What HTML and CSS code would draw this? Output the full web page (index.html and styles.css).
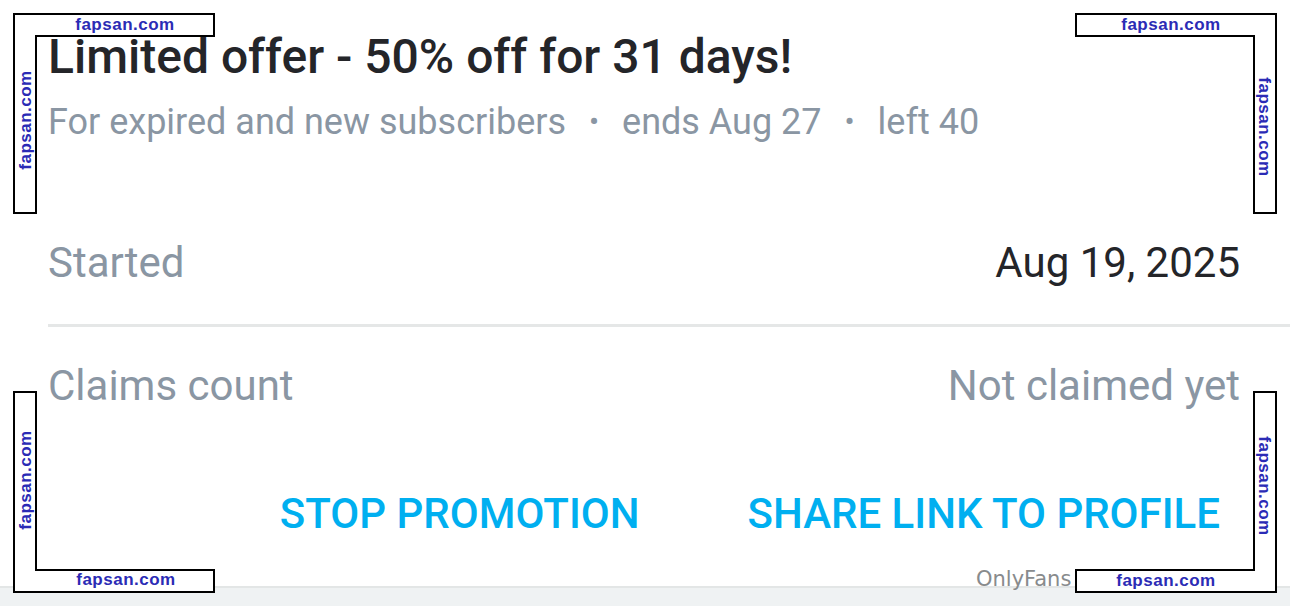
FILE: index.html
```html
<!DOCTYPE html>
<html lang="en">
<head>
    <meta charset="UTF-8">
    <meta name="viewport" content="width=device-width, initial-scale=1.0">
    <title>Limited offer</title>
    <link rel="stylesheet" href="styles.css">
</head>
<body>
    <div class="page">
        <div class="offer">
            <h1 class="offer-title">Limited offer - 50% off for 31 days!</h1>
            <div class="offer-meta">
                <span>For expired and new subscribers</span>
                <span class="dot">•</span>
                <span>ends Aug 27</span>
                <span class="dot">•</span>
                <span>left 40</span>
            </div>
        </div>

        <div class="row row-started">
            <span class="label">Started</span>
            <span class="value">Aug 19, 2025</span>
        </div>
        <div class="row row-claims">
            <span class="label">Claims count</span>
            <span class="value muted">Not claimed yet</span>
        </div>

        <div class="actions">
            <button class="action">STOP PROMOTION</button>
            <button class="action">SHARE LINK TO PROFILE</button>
        </div>

        <div class="brand">OnlyFans</div>
        <div class="bottom-bar"></div>

        <!-- watermark corners -->
        <svg class="watermark" width="1290" height="606" viewBox="0 0 1290 606">
            <g class="wm-frame">
                <polygon points="14,14 214,14 214,36 36,36 36,213 14,213"/>
                <polygon points="1076,14 1276,14 1276,213 1254,213 1254,36 1076,36"/>
                <polygon points="14,392 36,392 36,570 214,570 214,592 14,592"/>
                <polygon points="1254,392 1276,392 1276,592 1076,592 1076,570 1254,570"/>
            </g>
            <g class="wm-text">
                <text x="125" y="30">fapsan.com</text>
                <text x="1171" y="30">fapsan.com</text>
                <text x="126" y="585">fapsan.com</text>
                <text x="1166" y="586">fapsan.com</text>
                <text transform="translate(31 120) rotate(-90)">fapsan.com</text>
                <text transform="translate(31 480) rotate(-90)">fapsan.com</text>
                <text transform="translate(1259 127) rotate(90)">fapsan.com</text>
                <text transform="translate(1259 486) rotate(90)">fapsan.com</text>
            </g>
        </svg>
    </div>
</body>
</html>
```

FILE: styles.css
```css
body {
    margin: 0;
    background-color: #fff;
    font-family: 'Roboto', 'Noto Sans', sans-serif;
}
.page {
    position: relative;
    width: 1290px;
    height: 606px;
    overflow: hidden;
    display: flex;
    flex-direction: column;
}
.offer {
    padding: 29px 50px 0 48px;
}
.offer-title {
    margin: 0;
    font-size: 48px;
    line-height: 56px;
    font-weight: 500;
    color: #242529;
}
.offer-meta {
    margin-top: 16px;
    font-size: 36px;
    line-height: 42px;
    color: #8a96a3;
    display: flex;
}
.offer-meta .dot {
    width: 56px;
    text-align: center;
    font-size: 30px;
}
.row {
    display: flex;
    justify-content: space-between;
    margin-left: 48px;
    padding-right: 50px;
    font-size: 42px;
    line-height: 50px;
}
.row-started {
    margin-top: 95px;
    padding-bottom: 36px;
    border-bottom: 3px solid #e5e7e7;
}
.row-claims {
    padding-top: 34px;
}
.label {
    color: #8a96a3;
}
.value {
    color: #242529;
}
.value.muted {
    color: #8a96a3;
}
.actions {
    display: flex;
    justify-content: flex-end;
    gap: 108px;
    margin-top: 79px;
    padding-right: 70px;
}
.action {
    background: none;
    border: none;
    padding: 0;
    font-family: 'Roboto', sans-serif;
    font-size: 42px;
    line-height: 48px;
    font-weight: 500;
    color: #00aff0;
    cursor: pointer;
}
.brand {
    position: relative;
    z-index: 1;
    margin-top: 34px;
    margin-left: 976px;
    font-family: 'DejaVu Sans', sans-serif;
    font-size: 21px;
    line-height: 14px;
    color: #888b8d;
}
.bottom-bar {
    margin-top: auto;
    height: 20px;
    border-top: 2px solid #e3e6e6;
    background-color: #eff2f3;
}
.watermark {
    position: absolute;
    left: 0;
    top: 0;
    z-index: 2;
    pointer-events: none;
}
.wm-frame polygon {
    fill: #fff;
    stroke: #000;
    stroke-width: 2;
}
.wm-text text {
    font-family: 'Liberation Sans', Arial, sans-serif;
    font-weight: bold;
    font-size: 17px;
    letter-spacing: 0.5px;
    fill: #2b2bb5;
    text-anchor: middle;
}
```
